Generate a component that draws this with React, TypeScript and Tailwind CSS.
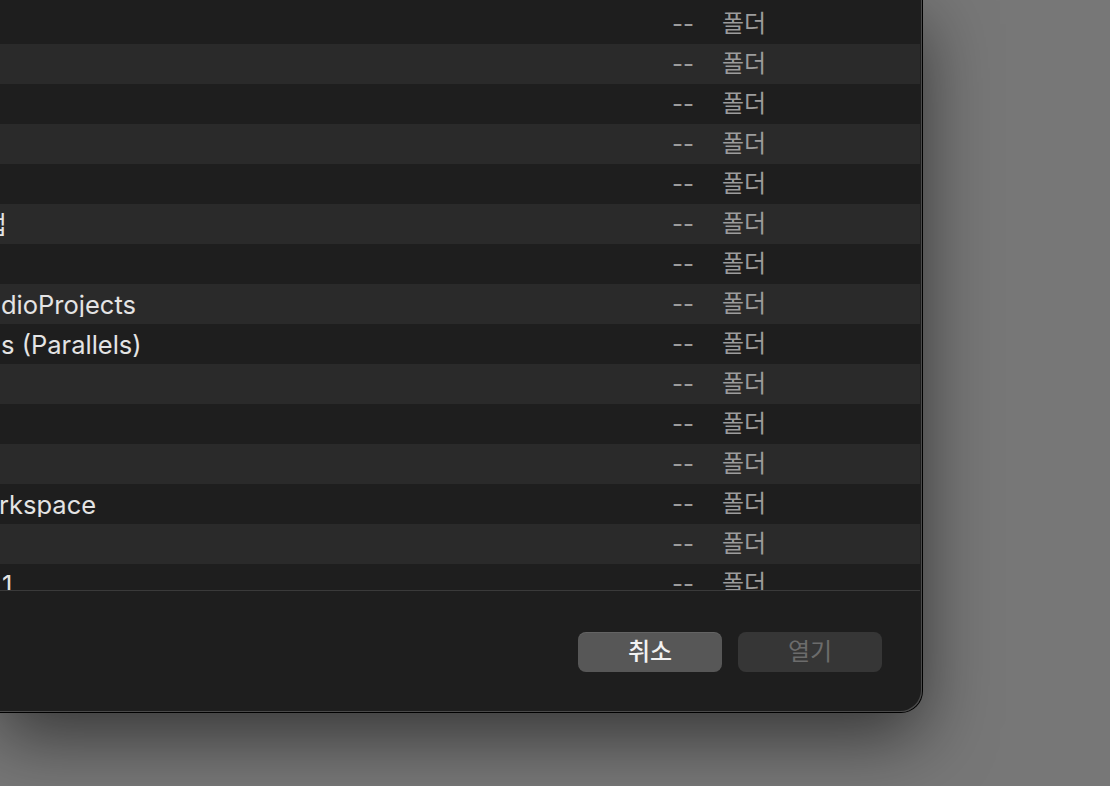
import React from 'react';

const rows = [
  { name: '', cls: '' },
  { name: '', cls: '' },
  { name: '', cls: '' },
  { name: '', cls: '' },
  { name: '', cls: '' },
  { name: '앱', cls: '-ml-[17px]' },
  { name: '', cls: '' },
  { name: 'dioProjects', cls: 'ml-[1px]' },
  { name: 's (Parallels)', cls: 'ml-[1px]' },
  { name: '', cls: '' },
  { name: '', cls: '' },
  { name: '', cls: '' },
  { name: 'rkspace', cls: '-ml-[1px]' },
  { name: '', cls: '' },
  { name: '1', cls: 'ml-[2px]' },
];

const font = { fontFamily: 'Inter, "Noto Sans CJK KR", sans-serif' };

const App = () => {
  return (
    <div className="w-[1110px] h-[786px] bg-[#777777] overflow-hidden" style={font}>
      <div className="w-[922px] h-[712px] rounded-br-[21px] bg-[#1e1e1e] overflow-hidden flex flex-col shadow-[inset_-1px_-1px_0_#4a4a4a,0_0_0_1px_#000,0_24px_70px_rgba(0,0,0,0.55)]">
        {/* File list */}
        <div className="h-[590px] overflow-hidden">
          {rows.map((row, i) => (
            <div
              key={i}
              className={`grid grid-cols-[672px_50px_1fr] items-center w-[920px] text-[24px] leading-none ${i === 0 ? 'h-[44px] pt-[4px]' : 'h-[40px]'} ${i % 2 === 1 ? 'bg-[#2a2a2a]' : 'bg-[#1e1e1e]'}`}
            >
              <div className="overflow-hidden whitespace-nowrap pt-[1px]">
                <span className={`block text-[25.5px] text-[#e4e4e4] ${row.cls}`}>{row.name}</span>
              </div>
              <span className="text-[#9c9c9c]">--</span>
              <span className="text-[#9c9c9c]">폴더</span>
            </div>
          ))}
        </div>
        <div className="h-[1px] w-[920px] bg-[#3a3a3a]"></div>
        {/* Footer */}
        <div className="flex-1 flex items-start justify-end gap-[16px] pt-[41px] pr-[40px]">
          <button className="w-[144px] h-[40px] rounded-[8px] bg-[#575757] text-[#f2f2f2] text-[24px] font-medium leading-none shadow-[inset_0_1px_0_rgba(255,255,255,0.08)]">
            취소
          </button>
          <button className="w-[144px] h-[40px] rounded-[8px] bg-[#363636] text-[#6c6c6c] text-[24px] leading-none">
            열기
          </button>
        </div>
      </div>
    </div>
  );
};

export default App;
